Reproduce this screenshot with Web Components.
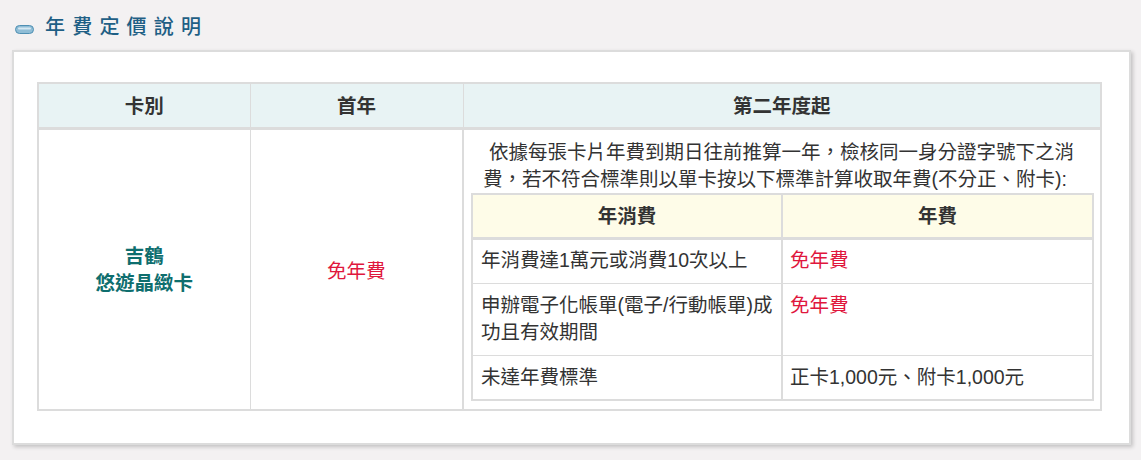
<!DOCTYPE html>
<html lang="zh-Hant">
<head>
<meta charset="utf-8">
<title>年費定價說明</title>
<style>
  html, body { margin: 0; padding: 0; background: #f3f1f2; }
  body { font-family: "Liberation Sans", "Noto Sans CJK TC", sans-serif; color: #333; }
</style>
</head>
<body>
<fee-section heading="年費定價說明">
  <fee-table></fee-table>
</fee-section>

<script>
const sectionTemplate = document.createElement('template');
sectionTemplate.innerHTML = `
  <style>
    :host { display: block; padding: 14px 10px 16px 12px; height: 460px; box-sizing: border-box; overflow: hidden; }
    .title { display: flex; align-items: center; height: 27px; margin-bottom: 9px; padding-left: 3px; }
    .title svg { flex: none; margin: 3px 11px 0 0; }
    h2 { margin: 0; font-size: 20px; line-height: 27px; font-weight: 500; letter-spacing: 7.2px; color: #1f5f85; }
    .card { background: #fff; border: 2px solid #dcdcdc; box-shadow: 2px 2px 4px rgba(0,0,0,.2); padding: 30px 27px 32px 23px; }
  </style>
  <div class="title">
    <svg width="19" height="9" viewBox="0 0 19 9">
      <rect x=".5" y=".5" width="18" height="8" rx="4" fill="#8fbdd6" stroke="#4f8fb3"/>
      <rect x="3" y="2.5" width="13" height="2" rx="1" fill="#d5e8f2"/>
    </svg>
    <h2></h2>
  </div>
  <div class="card"><slot></slot></div>
`;
class FeeSection extends HTMLElement {
  constructor() {
    super();
    this.attachShadow({ mode: 'open' }).appendChild(sectionTemplate.content.cloneNode(true));
    this.shadowRoot.querySelector('h2').textContent = this.getAttribute('heading');
  }
}
customElements.define('fee-section', FeeSection);

const tableTemplate = document.createElement('template');
tableTemplate.innerHTML = `
  <style>
    :host { display: block; font-size: 19.5px; color: #333; }
    table { border-collapse: collapse; table-layout: fixed; background: #fff; }
    th, td { border: 1px solid #dcdcdc; }
    th { font-weight: bold; text-align: center; }
    .outer { width: 1065px; border: 2px solid #dcdcdc; }
    .outer > tbody > tr > th { height: 40px; padding: 0 0 3px; background: #e8f3f4; border-bottom: 3px solid #dcdcdc; }
    .outer > tbody > tr > td { text-align: center; padding: 0; }
    .outer > tbody > tr > td.wide { border-left-width: 2px; padding: 9px 8px 8px 7px; vertical-align: top; }
    .card-name { font-weight: bold; color: #0e6e6e; line-height: 27px; }
    .red { color: #e0173d; }
    p { margin: 0; text-align: left; line-height: 27px; text-indent: 6px; padding-left: 12px; font-family: "Liberation Sans", "Noto Sans CJK SC", sans-serif; }
    .inner { width: 623px; border: 2px solid #dcdcdc; }
    .inner th { height: 39px; padding: 0 0 3px; background: #fefce8; border-bottom: 3px solid #dcdcdc; }
    .inner td { text-align: left; vertical-align: top; padding: 7px 8px 9px; line-height: 27px; font-family: "Liberation Sans", "Noto Sans CJK SC", sans-serif; }
    .inner tr:nth-child(n+3) td { padding-top: 8px; }
    .inner tr:last-child td { padding-bottom: 8px; }
    .inner td + td { padding-left: 7px; }
    .inner th + th, .inner td + td { border-left-width: 2px; }
  </style>
  <table class="outer">
    <colgroup><col style="width:212px"><col style="width:213px"><col></colgroup>
    <tbody>
      <tr><th>卡別</th><th>首年</th><th>第二年度起</th></tr>
      <tr>
        <td class="card-name">吉鶴<br>悠遊晶緻卡</td>
        <td class="red">免年費</td>
        <td class="wide">
          <p>依據每張卡片年費到期日往前推算一年，檢核同一身分證字號下之消費，若不符合標準則以單卡按以下標準計算收取年費(不分正、附卡):</p>
          <table class="inner">
            <colgroup><col style="width:310px"><col></colgroup>
            <tbody>
              <tr><th>年消費</th><th>年費</th></tr>
              <tr><td>年消費達1萬元或消費10次以上</td><td class="red">免年費</td></tr>
              <tr><td>申辦電子化帳單(電子/行動帳單)成功且有效期間</td><td class="red">免年費</td></tr>
              <tr><td>未達年費標準</td><td>正卡1,000元、附卡1,000元</td></tr>
            </tbody>
          </table>
        </td>
      </tr>
    </tbody>
  </table>
`;
class FeeTable extends HTMLElement {
  constructor() {
    super();
    this.attachShadow({ mode: 'open' }).appendChild(tableTemplate.content.cloneNode(true));
  }
}
customElements.define('fee-table', FeeTable);
</script>
</body>
</html>
